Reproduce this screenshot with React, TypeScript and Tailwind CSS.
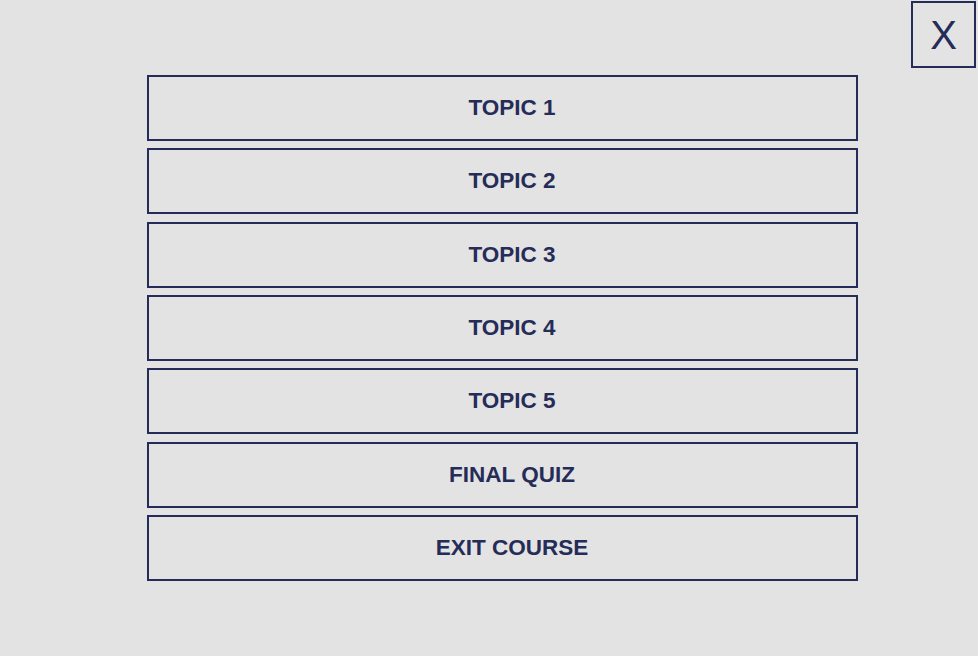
const items = ['TOPIC 1', 'TOPIC 2', 'TOPIC 3', 'TOPIC 4', 'TOPIC 5', 'FINAL QUIZ', 'EXIT COURSE']

export default function App() {
  return (
    <div className="w-[978px] h-[656px] bg-[#e3e3e3] font-['Liberation_Sans',Arial,sans-serif] text-[#252c58] flex flex-col pt-[1px]">
      {/* close button */}
      <div className="flex justify-end pr-[2px]">
        <button className="w-[65px] h-[67px] border-2 border-[#252c58] flex items-center justify-center text-[40px] leading-none">
          X
        </button>
      </div>

      {/* menu */}
      <nav className="ml-[147px] w-[711px] mt-[7px] flex flex-col gap-[7.33px]">
        {items.map((item) => (
          <button
            key={item}
            className="h-[66px] border-2 border-[#252c58] flex items-center justify-center pl-[19px] text-[22.5px] font-bold"
          >
            {item}
          </button>
        ))}
      </nav>
    </div>
  )
}
